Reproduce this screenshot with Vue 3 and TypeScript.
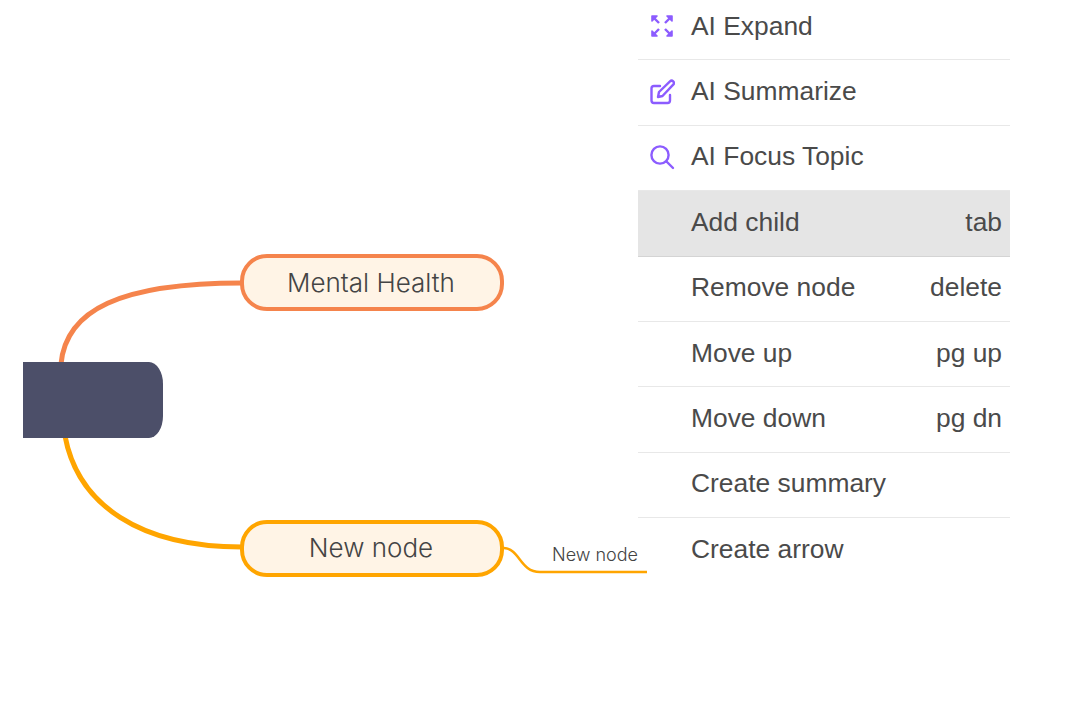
<script setup lang="ts">
interface MenuItem {
  label: string
  shortcut?: string
  icon?: 'expand' | 'edit' | 'search'
  active?: boolean
}

const items: MenuItem[] = [
  { label: 'AI Expand', icon: 'expand' },
  { label: 'AI Summarize', icon: 'edit' },
  { label: 'AI Focus Topic', icon: 'search' },
  { label: 'Add child', shortcut: 'tab', active: true },
  { label: 'Remove node', shortcut: 'delete' },
  { label: 'Move up', shortcut: 'pg up' },
  { label: 'Move down', shortcut: 'pg dn' },
  { label: 'Create summary' },
  { label: 'Create arrow' },
]
</script>

<template>
  <div class="canvas">
    <svg class="edges" width="1065" height="720" viewBox="0 0 1065 720" fill="none">
      <path d="M61 364C66 310 120 283 242 283" stroke="#f5844c" stroke-width="5" />
      <path d="M65 436C78 505 140 547 242 547" stroke="#ffa500" stroke-width="5" />
      <path d="M504 548C520 549 520 572 540 572H647" stroke="#ffa500" stroke-width="2.5" />
    </svg>

    <div class="root-node" />
    <div class="node node-red">Mental Health</div>
    <div class="node node-orange">New node</div>
    <div class="leaf">New node</div>

    <ul class="menu">
      <li v-for="item in items" :key="item.label" class="row" :class="{ active: item.active }">
        <span class="icon">
          <svg v-if="item.icon === 'expand'" width="26" height="26" viewBox="0 0 26 26" fill="#8c5cff" stroke="#8c5cff" stroke-width="2.4">
            <path d="M3 3H8L3 8Z" stroke-width="1.6" stroke-linejoin="round" />
            <path d="M4 4L10 10" />
            <path d="M23 3H18L23 8Z" stroke-width="1.6" stroke-linejoin="round" />
            <path d="M22 4L16 10" />
            <path d="M3 23H8L3 18Z" stroke-width="1.6" stroke-linejoin="round" />
            <path d="M4 22L10 16" />
            <path d="M23 23H18L23 18Z" stroke-width="1.6" stroke-linejoin="round" />
            <path d="M22 22L16 16" />
          </svg>
          <svg v-else-if="item.icon === 'edit'" width="26" height="26" viewBox="0 0 26 26" fill="none" stroke="#8c5cff" stroke-width="2.4" stroke-linejoin="round" stroke-linecap="round">
            <path d="M11 7H5C3.5 7 2.5 8 2.5 9.5V21.5C2.5 23 3.5 24 5 24H18.5C20 24 21 23 21 21.5V16" />
            <path d="M9 18L10 13L21 2.4C21.9 1.5 23.3 1.5 24.2 2.4C25.1 3.3 25.1 4.7 24.2 5.6L13.5 17Z" />
          </svg>
          <svg v-else-if="item.icon === 'search'" width="26" height="26" viewBox="0 0 26 26" fill="none" stroke="#8c5cff" stroke-width="2.4" stroke-linecap="round">
            <circle cx="11" cy="11" r="8.6" />
            <path d="M17.5 17.5L24 24" />
          </svg>
        </span>
        <span class="label">{{ item.label }}</span>
        <span v-if="item.shortcut" class="shortcut">{{ item.shortcut }}</span>
      </li>
    </ul>
  </div>
</template>

<style>
html,
body {
  margin: 0;
  background: #fff;
  overflow: hidden;
}
</style>

<style scoped>
.canvas {
  position: relative;
  width: 1065px;
  height: 720px;
  overflow: hidden;
  background: #fff;
}

.edges {
  position: absolute;
  left: 0;
  top: 0;
}

.root-node {
  position: absolute;
  left: 23px;
  top: 362px;
  width: 140px;
  height: 76px;
  background: #4c4f69;
  border-radius: 0 14px 14px 0 / 0 22px 22px 0;
}

.node {
  position: absolute;
  left: 240px;
  width: 264px;
  height: 57px;
  box-sizing: border-box;
  display: flex;
  align-items: center;
  justify-content: center;
  padding-right: 2px;
  background: #fff4e6;
  border: 4px solid;
  border-radius: 27px;
  font-family: Inter, sans-serif;
  font-size: 26px;
  font-weight: 300;
  color: #444;
}

.node-red {
  top: 254px;
  border-color: #f5844c;
}

.node-orange {
  top: 519.5px;
  padding-bottom: 2px;
  border-color: #ffa500;
}

.leaf {
  position: absolute;
  left: 552px;
  top: 544px;
  font-family: Inter, sans-serif;
  font-size: 18px;
  font-weight: 300;
  line-height: 22px;
  color: #444;
}

.menu {
  position: absolute;
  left: 638px;
  top: -5px;
  width: 372px;
  margin: 0;
  padding: 0;
  list-style: none;
  font-family: 'Liberation Sans', Arial, sans-serif;
  font-size: 26.4px;
  color: #4a4a4a;
}

.row {
  display: flex;
  align-items: center;
  height: 65.4px;
  box-sizing: border-box;
  padding: 0 8px 2px 11px;
  border-bottom: 1.5px solid #e8e8e8;
}

.row:last-child {
  border-bottom: 0;
}

.row.active {
  background: #e5e5e5;
  border-bottom-color: #d4d4d4;
}

.icon {
  width: 42px;
  height: 26px;
  flex: none;
  display: flex;
  align-items: center;
}

.label {
  flex: 1;
}
</style>
